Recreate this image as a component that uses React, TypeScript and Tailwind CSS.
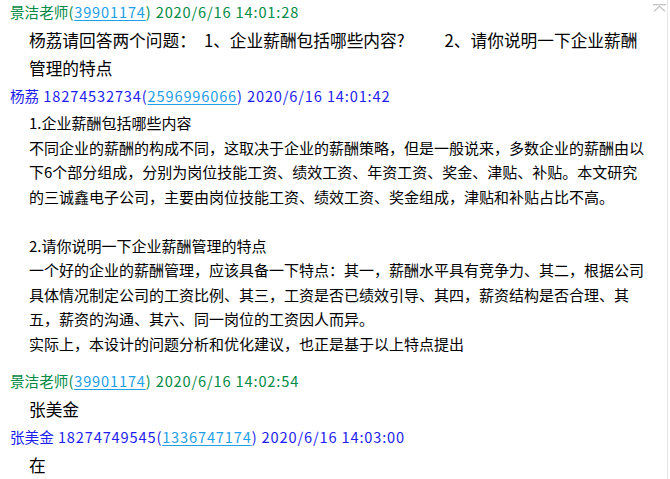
import React from 'react';

type Msg = {
  id: number;
  name: string;
  phone?: string;
  qq: string;
  time: string;
  teacher: boolean;
};

const FONT = { fontFamily: '"Noto Sans CJK SC", "Noto Sans", sans-serif' };

// 消息头：名字 手机(QQ) 时间 — 数字部分加一点字距，接近原图的雅黑数字宽度
function Header({ msg }: { msg: Msg }) {
  const color = msg.teacher ? 'text-[#008a45]' : 'text-[#1d1df2]';
  return (
    <div className={`h-6 leading-6 pl-[10px] text-[14.6px] whitespace-nowrap ${color}`}>
      <span>{msg.name}</span>
      {msg.phone && <span className="tracking-[0.85px]"> {msg.phone}</span>}
      <span className="tracking-[0.85px]">(</span>
      <span className="tracking-[0.85px] text-[#1ea0e8] underline underline-offset-2">{msg.qq}</span>
      <span className="tracking-[0.85px]">) {msg.time}</span>
    </div>
  );
}

const bodyLines = [
  '1.企业薪酬包括哪些内容',
  '不同企业的薪酬的构成不同，这取决于企业的薪酬策略，但是一般说来，多数企业的薪酬由以',
  '下6个部分组成，分别为岗位技能工资、绩效工资、年资工资、奖金、津贴、补贴。本文研究',
  '的三诚鑫电子公司，主要由岗位技能工资、绩效工资、奖金组成，津贴和补贴占比不高。',
  '',
  '2.请你说明一下企业薪酬管理的特点',
  '一个好的企业的薪酬管理，应该具备一下特点：其一，薪酬水平具有竞争力、其二，根据公司',
  '具体情况制定公司的工资比例、其三，工资是否已绩效引导、其四，薪资结构是否合理、其',
  '五，薪资的沟通、其六、同一岗位的工资因人而异。',
  '实际上，本设计的问题分析和优化建议，也正是基于以上特点提出',
];

export default function App() {
  const m1: Msg = { id: 1, name: '景洁老师', qq: '39901174', time: '2020/6/16 14:01:28', teacher: true };
  const m2: Msg = { id: 2, name: '杨荔', phone: '18274532734', qq: '2596996066', time: '2020/6/16 14:01:42', teacher: false };
  const m3: Msg = { id: 3, name: '景洁老师', qq: '39901174', time: '2020/6/16 14:02:54', teacher: true };
  const m4: Msg = { id: 4, name: '张美金', phone: '18274749545', qq: '1336747174', time: '2020/6/16 14:03:00', teacher: false };

  return (
    <div className="w-[670px] h-[479px] bg-white flex overflow-hidden" style={FONT}>
      <div className="flex-1 flex flex-col">
        <Header msg={m1} />
        <div className="py-[2px] pl-[29px] text-[16.7px] leading-[28px] text-black whitespace-nowrap">
          <div>
            <span>杨荔请回答两个问题：</span>
            <span className="ml-[8px]">1、企业薪酬包括哪些内容?</span>
            <span className="ml-[40px]">2、请你说明一下企业薪酬</span>
          </div>
          <div>管理的特点</div>
        </div>

        <Header msg={m2} />
        <div className="pt-[3px] pb-[13px] pl-[29px] text-[15px] leading-[24.5px] text-black whitespace-nowrap">
          {bodyLines.map((line, i) => (
            <div key={i} className="h-[24.5px]">{line}</div>
          ))}
        </div>

        <Header msg={m3} />
        <div className="py-[2px] pl-[29px] text-[16.7px] leading-[28px] text-black">张美金</div>

        <Header msg={m4} />
        <div className="py-[2px] pl-[29px] text-[16.7px] leading-[28px] text-black">在</div>
      </div>

      {/* 滚动条 */}
      <div className="w-[17px] shrink-0 border-r border-[#e6e6e6] pt-[4px] pl-[2px] mr-[2px]">
        <svg width="13" height="8" viewBox="0 0 13 8" fill="none" stroke="#c4c4c4" strokeWidth="1.3">
          <path d="M0 0.7H13" />
          <path d="M1 7.3L6.5 2.3L12 7.3" />
        </svg>
      </div>
    </div>
  );
}
